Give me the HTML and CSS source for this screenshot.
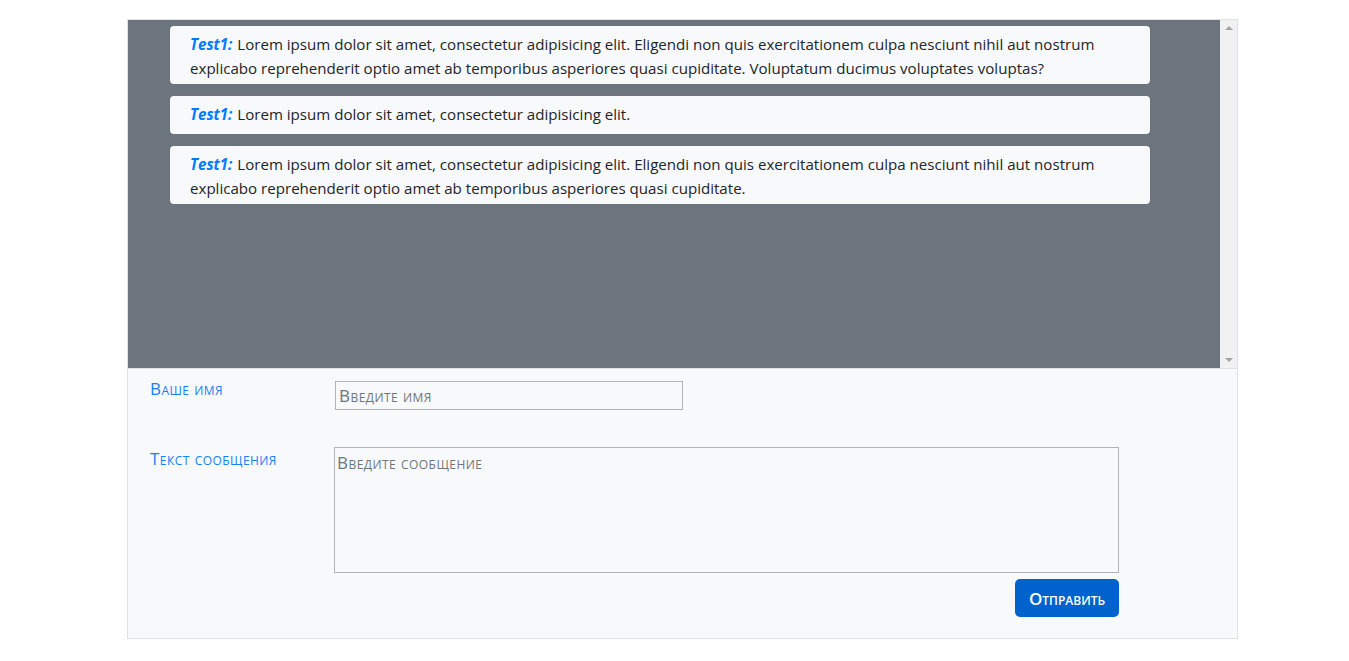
FILE: index.html
```html
<!DOCTYPE html>
<html lang="ru">
<head>
<meta charset="utf-8">
<title>Чат</title>
<link rel="stylesheet" href="styles.css">
</head>
<body>
<div class="page">
  <div class="chat">
    <div class="chat-messages">
      <div class="msg"><span class="author">Test1:</span> Lorem ipsum dolor sit amet, consectetur adipisicing elit. Eligendi non quis exercitationem culpa nesciunt nihil aut nostrum explicabo reprehenderit optio amet ab temporibus asperiores quasi cupiditate. Voluptatum ducimus voluptates voluptas?</div>
      <div class="msg"><span class="author">Test1:</span> Lorem ipsum dolor sit amet, consectetur adipisicing elit.</div>
      <div class="msg"><span class="author">Test1:</span> Lorem ipsum dolor sit amet, consectetur adipisicing elit. Eligendi non quis exercitationem culpa nesciunt nihil aut nostrum explicabo reprehenderit optio amet ab temporibus asperiores quasi cupiditate.</div>
    </div>
    <div class="scrollbar">
      <span class="arrow up"></span>
      <span class="arrow down"></span>
    </div>
  </div>
  <form class="send-form">
    <label class="label label-name" for="name">Ваше имя</label>
    <div class="field"><input id="name" class="input-name" type="text" placeholder="Введите имя"></div>
    <label class="label label-text" for="text">Текст сообщения</label>
    <div class="field"><textarea id="text" class="input-text" placeholder="Введите сообщение"></textarea></div>
    <div class="actions"><button type="button" class="btn">Отправить</button></div>
  </form>
</div>
</body>
</html>
```
FILE: styles.css
```css
html, body {
  margin: 0;
  padding: 0;
  background: #ffffff;
}
body {
  font-family: "Open Sans", "Noto Sans", sans-serif;
  font-size: 16px;
  line-height: 24px;
  color: #212529;
}
.page {
  width: 1111px;
  margin-left: 127px;
  padding-top: 19px;
}
.chat {
  display: flex;
  height: 349px;
  border: 1px solid #dee2e6;
  border-bottom: none;
  background: #6c757d;
  box-sizing: border-box;
}
.chat-messages {
  flex: 1;
  padding: 6px 0 0 42px;
  display: flex;
  flex-direction: column;
  gap: 12px;
}
.msg {
  width: 980px;
  box-sizing: border-box;
  min-height: 38px;
  padding: 6px 20px 4px 20px;
  background: #f8f9fa;
  border-radius: 4px;
  font-size: 15.1px;
}
.author {
  color: #007bff;
  font-weight: 700;
  font-style: italic;
  padding-right: 1px;
}
.scrollbar {
  width: 17px;
  background: #f1f1f1;
  display: flex;
  flex-direction: column;
  justify-content: space-between;
  align-items: center;
  padding: 6px 0;
}
.arrow {
  width: 0;
  height: 0;
  border-left: 4px solid transparent;
  border-right: 4px solid transparent;
}
.arrow.up {
  border-bottom: 4px solid #a3a3a3;
}
.arrow.down {
  border-top: 4px solid #a3a3a3;
}
.send-form {
  margin: 0;
  display: grid;
  grid-template-columns: 184px 785px;
  grid-template-rows: auto auto auto;
  padding: 8px 0 21px 22px;
  background: #f8f9fa;
  border: 1px solid #dee2e6;
  box-sizing: border-box;
}
.label {
  color: #1a7ef7;
  font-variant: small-caps;
  font-size: 17px;
  letter-spacing: 0.45px;
  line-height: 24px;
}
.label-text {
  margin-top: 37px;
}
.field {
  display: flex;
}
.input-name {
  margin-top: 4px;
  margin-left: 1px;
  width: 348px;
  height: 29px;
  box-sizing: border-box;
  border: 1px solid #b3b3b3;
  background: transparent;
  padding: 0 3px;
  font-family: "Open Sans", "Noto Sans", sans-serif;
  font-size: 17px;
  letter-spacing: 0.45px;
  font-variant: small-caps;
  color: #495057;
  outline: none;
}
.input-text {
  margin-top: 37px;
  width: 785px;
  height: 126px;
  box-sizing: border-box;
  border: 1px solid #b3b3b3;
  background: transparent;
  padding: 3px 2px;
  font-family: "Open Sans", "Noto Sans", sans-serif;
  font-size: 17px;
  letter-spacing: 0.45px;
  line-height: 24px;
  font-variant: small-caps;
  color: #495057;
  resize: none;
  outline: none;
}
.input-name::placeholder,
.input-text::placeholder {
  color: #6c757d;
  opacity: 1;
}
.actions {
  grid-column: 2;
  display: flex;
  justify-content: flex-end;
  margin-top: 6px;
}
.btn {
  width: 104px;
  height: 38px;
  border: none;
  border-radius: 5px;
  background: #0062cc;
  color: #ffffff;
  font-family: "Open Sans", "Noto Sans", sans-serif;
  font-size: 17px;
  font-weight: 600;
  font-variant: small-caps;
  padding: 0;
  cursor: pointer;
}
```
